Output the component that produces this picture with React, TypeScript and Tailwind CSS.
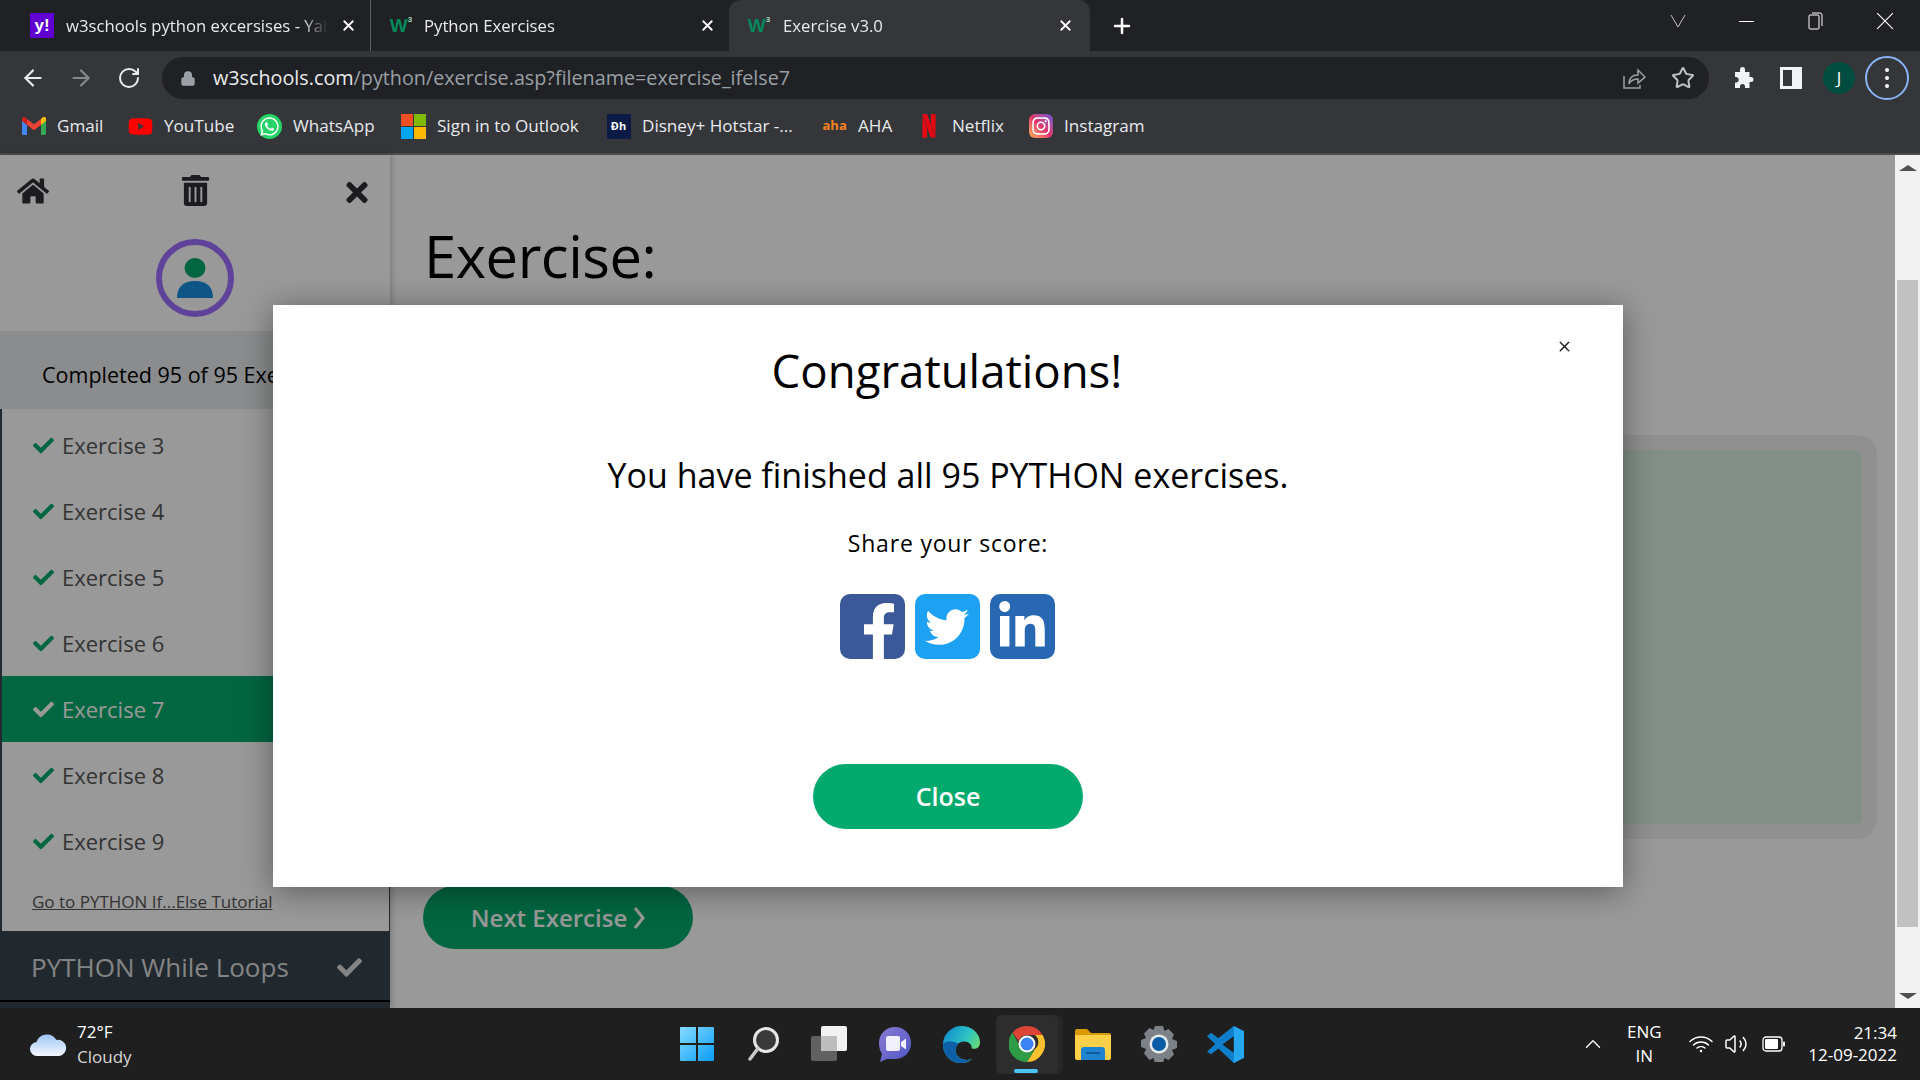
import { ArrowLeft, ArrowRight, RotateCw, Lock, Star, Plus, X, ChevronUp, Volume2 } from "lucide-react";
import {
  FaHome,
  FaTrashAlt,
  FaTimes,
  FaCheck,
  FaFacebookF,
  FaTwitter,
  FaLinkedinIn,
  FaWhatsapp,
  FaInstagram,
  FaYoutube,
} from "react-icons/fa";
import { SiNetflix } from "react-icons/si";

const W3Icon = () => (
  <span className="flex w-[24px] items-start justify-center font-['Liberation_Sans',sans-serif] font-bold text-[#04895a]">
    <span className="text-[19px] leading-[24px]">W</span>
    <span className="text-[8px] leading-[12px] text-[#9fd8c0]">3</span>
  </span>
);

const tabs = [
  { title: "w3schools python excersises - Yahoo", width: "w-[371px]", pad: "pl-[30px] pr-[13px]", gap: "ml-[12px]", active: false },
  { title: "Python Exercises", width: "w-[358px]", pad: "pl-[18px] pr-[13px]", gap: "ml-[11px]", active: false },
  { title: "Exercise v3.0", width: "w-[361px]", pad: "pl-[18px] pr-[16px]", gap: "ml-[12px]", active: true },
];

const bookmarks = [
  { name: "Gmail", width: "w-[107px]", icon: <GmailIcon /> },
  { name: "YouTube", width: "w-[129px]", icon: <FaYoutube className="h-[25px] w-[25px] text-[#f00]" /> },
  { name: "WhatsApp", width: "w-[144px]", icon: <WhatsAppIcon /> },
  { name: "Sign in to Outlook", width: "w-[205px]", icon: <MsIcon /> },
  { name: "Disney+ Hotstar -...", width: "w-[216px]", icon: <DisneyIcon /> },
  { name: "AHA", width: "w-[94px]", icon: <span className="w-[24px] text-center text-[13px] font-bold text-[#f58220]">aha</span> },
  { name: "Netflix", width: "w-[112px]", icon: <SiNetflix className="h-[24px] w-[24px] text-[#e50914]" /> },
  { name: "Instagram", width: "w-[130px]", icon: <InstaIcon /> },
];

const exercises = [3, 4, 5, 6, 7, 8, 9];

function GmailIcon() {
  return (
    <svg viewBox="0 0 24 18" className="h-[18px] w-[24px]">
      <path d="M0 3v13.5A1.5 1.5 0 0 0 1.5 18H5V8z" fill="#4285f4" />
      <path d="M24 3v13.5a1.5 1.5 0 0 1-1.500 1.500H19V8z" fill="#34a853" />
      <path d="M19 2v6l5-4V2c0-2-2-2.800-3.300-1.800z" fill="#fbbc04" />
      <path d="M5 8V2l7 5.300L19 2v6l-7 5.300z" fill="#ea4335" />
      <path d="M0 2v2l5 4V2L3.300.2C2-.800 0 0 0 2z" fill="#c5221f" />
    </svg>
  );
}

function WhatsAppIcon() {
  return (
    <span className="flex h-[25px] w-[25px] items-center justify-center rounded-full bg-[#25d366]">
      <FaWhatsapp className="h-[21px] w-[21px] text-white" />
    </span>
  );
}

function MsIcon() {
  return (
    <span className="grid h-[25px] w-[25px] grid-cols-2 grid-rows-2 gap-[1px]">
      <span className="bg-[#f25022]" />
      <span className="bg-[#7fba00]" />
      <span className="bg-[#00a4ef]" />
      <span className="bg-[#ffb900]" />
    </span>
  );
}

function DisneyIcon() {
  return (
    <span className="flex h-[25px] w-[24px] items-center justify-center bg-[#0c1a46] text-[11px] font-bold text-white">
      Ɖh
    </span>
  );
}

function InstaIcon() {
  return (
    <span className="flex h-[24px] w-[24px] items-center justify-center rounded-[6px] bg-gradient-to-tr from-[#fdb04a] via-[#e1306c] to-[#6a4cd8]">
      <FaInstagram className="h-[20px] w-[20px] text-white" />
    </span>
  );
}

function PuzzleIcon() {
  return (
    <svg viewBox="0 0 24 24" className="h-[24px] w-[24px]" fill="#f1f3f4">
      <path d="M10 3.500a2.500 2.500 0 0 1 5 0V6h4.500v5H21a2.500 2.500 0 0 1 0 5h-1.500v6H15v-1.500a2.500 2.500 0 0 0-5 0V22H5v-5.500h1.500a2.800 2.800 0 0 0 0-5.500H5V6h5z" />
    </svg>
  );
}

function WinLogo() {
  return (
    <svg viewBox="0 0 36 36" className="h-[36px] w-[36px]">
      <defs>
        <linearGradient id="win" x1="0" y1="0" x2="1" y2="1">
          <stop offset="0" stopColor="#86dcff" />
          <stop offset="1" stopColor="#0a9cf5" />
        </linearGradient>
      </defs>
      <path d="M1 2a1 1 0 0 1 1-1h15v16H1zM19 1h15a1 1 0 0 1 1 1v15H19zM1 19h16v16H2a1 1 0 0 1-1-1zM19 19h16v15a1 1 0 0 1-1 1H19z" fill="url(#win)" />
    </svg>
  );
}

function SearchIcon() {
  return (
    <svg viewBox="0 0 36 36" className="h-[36px] w-[36px]">
      <circle cx="21" cy="14" r="11.500" fill="#3a3a3a" stroke="#e6e6e6" strokeWidth="3" />
      <path d="M12.500 23 5 33" stroke="#c9c9c9" strokeWidth="3.500" strokeLinecap="round" />
    </svg>
  );
}

function TaskViewIcon() {
  return (
    <svg viewBox="0 0 36 36" className="h-[36px] w-[36px]">
      <rect x="10" y="0" width="26" height="25" rx="2" fill="#f2f2f2" />
      <rect x="0" y="10" width="26" height="25" rx="2" fill="#6d6d6d" fillOpacity="0.85" />
      <rect x="10" y="10" width="16" height="15" fill="#bdbdbd" />
    </svg>
  );
}

function ChatIcon() {
  return (
    <svg viewBox="0 0 36 36" className="h-[36px] w-[36px]">
      <defs>
        <linearGradient id="chat" x1="0" y1="0" x2="1" y2="1">
          <stop offset="0" stopColor="#8a7bd4" />
          <stop offset="1" stopColor="#4e55c4" />
        </linearGradient>
      </defs>
      <path d="M18 1c9.500 0 16 7 16 16s-6.500 16-16 16h-8l-7 3 2-8C3 25 2 21 2 17 2 8 8.500 1 18 1z" fill="url(#chat)" />
      <rect x="9" y="10" width="14" height="15" rx="2" fill="#f1effc" />
      <path d="M24 16l5-3.500v11l-5-3.500z" fill="#f1effc" />
    </svg>
  );
}

function EdgeIcon() {
  return (
    <svg viewBox="0 0 36 36" className="h-[37px] w-[37px]">
      <defs>
        <linearGradient id="edgeA" x1="0" y1="0" x2="1" y2="0.600">
          <stop offset="0" stopColor="#0c85d0" />
          <stop offset="0.600" stopColor="#2dc3c4" />
          <stop offset="1" stopColor="#70e06b" />
        </linearGradient>
      </defs>
      <path d="M18 0C8 0 0 8 0 18c0 10 7 18 17 18 4 0 8-1 11-4-5 2-11 1-14-3-3-4-2-9 1-12 4-3 9-2 11 0 2 2 2 4 2 5 4 1 8-1 8-6C36 7 28 0 18 0z" fill="url(#edgeA)" />
      <path d="M0 18c0 10 7 18 17 18 4 0 8-1 11-4-5 2-11 1-14-3-3-4-2-9 1-12-4-2-12-4-15 1z" fill="#0d5fa8" />
    </svg>
  );
}

function ChromeIcon() {
  return (
    <svg viewBox="0 0 36 36" className="h-[36px] w-[36px]">
      <path d="M18 0a18 18 0 0 1 15.600 9H18a9 9 0 0 0-8.500 6L3.500 6.500A18 18 0 0 1 18 0z" fill="#db4437" />
      <path d="M33.600 9A18 18 0 0 1 18 36l8-13a9 9 0 0 0 0-14z" fill="#fbc02d" />
      <path d="M18 36A18 18 0 0 1 3.500 6.500l7 13A9 9 0 0 0 26 23z" fill="#2e9b47" />
      <circle cx="18" cy="18" r="8.500" fill="#fff" />
      <circle cx="18" cy="18" r="6.500" fill="#3b82f6" />
    </svg>
  );
}

function FolderIcon() {
  return (
    <svg viewBox="0 0 36 36" className="h-[36px] w-[36px]">
      <path d="M0 5a2 2 0 0 1 2-2h10l4 4h18a2 2 0 0 1 2 2v4H0z" fill="#d99a06" />
      <path d="M0 9h36v23a2 2 0 0 1-2 2H2a2 2 0 0 1-2-2z" fill="#fdd047" />
      <path d="M6 34V24a3 3 0 0 1 3-3h18a3 3 0 0 1 3 3v10z" fill="#1e84d0" />
      <rect x="11" y="26" width="14" height="2" fill="#0f5a9a" />
    </svg>
  );
}

function GearIcon() {
  return (
    <svg viewBox="0 0 36 36" className="h-[36px] w-[36px]">
      <path d="M14 0h8l1.500 5 4-2 5.500 5.500-2 4.500 5 2v7l-5 2 2 4.500-5.500 5.500-4-2-1.500 5h-8l-1.500-5-4 2L3 27.500 5 23l-5-2v-7l5-2-2-4.500L8.500 2l4 2z" fill="#7c8288" />
      <circle cx="18" cy="18" r="9.500" fill="#e7eaec" />
      <circle cx="18" cy="18" r="7" fill="#0a5ba6" />
    </svg>
  );
}

function VsCodeIcon() {
  return (
    <svg viewBox="0 0 36 36" className="h-[37px] w-[37px]">
      <path d="M26 0 36 5v26l-10 5-15-14-7 5.500-4-2.500 8-7.500-8-7.500L4 6.500 11 12z" fill="#0f7fcc" />
      <path d="M26 0 36 5v26l-10 5z" fill="#25a6ee" />
      <path d="M26 10 15 18l11 8z" fill="#1f1f1f" />
    </svg>
  );
}

function BatteryIcon() {
  return (
    <svg viewBox="0 0 24 16" className="h-[16px] w-[24px]">
      <rect x="1" y="1" width="19" height="14" rx="3" fill="none" stroke="#fff" strokeWidth="1.300" />
      <rect x="3" y="3" width="13" height="10" rx="1" fill="#fff" />
      <rect x="21" y="5.500" width="2" height="5" rx="1" fill="#fff" />
    </svg>
  );
}

function WifiIcon() {
  return (
    <svg viewBox="0 0 24 18" className="h-[18px] w-[24px]" fill="none" stroke="#fff" strokeWidth="1.500" strokeLinecap="round">
      <path d="M1 6.500c6-6 16-6 22 0" />
      <path d="M4.500 10c4-4 11-4 15 0" />
      <path d="M8 13c2.500-2 5.500-2 8 0" />
      <circle cx="12" cy="16" r="1.200" fill="#fff" stroke="none" />
    </svg>
  );
}

function ShareIcon() {
  return (
    <svg viewBox="0 0 24 24" className="h-[24px] w-[24px]" fill="none" stroke="#9aa0a6" strokeWidth="1.500">
      <path d="M2 10v12h16v-3" />
      <path d="M7 18c0-6 3-9 9-9V4l7 7-7 6v-4c-4 0-7 1-9 5z" />
    </svg>
  );
}

function Avatar() {
  return (
    <div className="flex h-[78px] w-[78px] items-center justify-center rounded-full border-[6px] border-[#9e6eff]">
      <svg viewBox="0 0 36 40" className="h-[40px] w-[36px]">
        <ellipse cx="18" cy="10" rx="10.500" ry="10" fill="#04AA6D" />
        <path d="M0 40c0-10 5-17 18-17s18 7 18 17z" fill="#1a8fe0" />
      </svg>
    </div>
  );
}

function Sidebar() {
  return (
    <aside className="flex h-full w-[390px] shrink-0 flex-col overflow-hidden bg-white shadow-[2px_0_6px_rgba(0,0,0,0.2)]">
      <div className="flex h-[84px] shrink-0 items-start justify-between pl-[17px] pr-[20px] pt-[20px] text-[#2d3036]">
        <FaHome className="h-[32px] w-[32px]" />
        <FaTrashAlt className="mr-[2px] h-[31px] w-[29px]" />
        <FaTimes className="mt-[2px] h-[31px] w-[26px]" />
      </div>
      <div className="flex h-[92px] shrink-0 flex-col items-center">
        <Avatar />
      </div>
      <div className="flex h-[78px] shrink-0 items-center whitespace-nowrap bg-[#E7E9EB] pl-[42px] pt-[10px] text-[21.500px] leading-none text-black">
        Completed 95 of 95 Exercises
      </div>
      <div className="flex min-h-0 flex-1 flex-col border-l-[2px] border-r-[1px] border-[#38444d] pt-[3px]">
        {exercises.map((n) => (
          <div
            key={n}
            className={`flex h-[66px] shrink-0 items-center pl-[31px] pt-[1px] text-[22px] ${n === 7 ? "bg-[#04AA6D] text-white" : "text-[#555]"}`}
          >
            <FaCheck className={`mr-[8px] h-[21px] w-[21px] ${n === 7 ? "text-white" : "text-[#04AA6D]"}`} />
            Exercise {n}
          </div>
        ))}
        <a className="ml-[30px] mt-[4px] whitespace-nowrap text-[17px] leading-[48px] text-[#555] underline">Go to PYTHON If...Else Tutorial</a>
      </div>
      <div className="flex h-[77px] shrink-0 flex-col bg-[#38444d]">
        <div className="flex h-[71px] items-center justify-between border-b-[2px] border-black pl-[31px] pr-[28px] pt-[3px] text-[26px] text-[#ddd]">
          PYTHON While Loops
          <FaCheck className="h-[25px] w-[25px]" />
        </div>
      </div>
    </aside>
  );
}

function Modal() {
  return (
    <div className="absolute left-[273px] top-[150px] flex h-[582px] w-[1350px] flex-col items-center bg-white shadow-[0_4px_30px_rgba(0,0,0,0.4)]">
      <button className="absolute right-[50px] top-[33px] text-[#222]">
        <X className="h-[17px] w-[17px]" strokeWidth={2} />
      </button>
      <h2 className="mr-[2px] mt-[30px] text-[45.600px] leading-[70px] text-black">Congratulations!</h2>
      <p className="mt-[37px] text-[34px] leading-[66px] text-black">You have finished all 95 PYTHON exercises.</p>
      <p className="mt-[17px] text-[23px] leading-[36px] tracking-[0.8px] text-black">Share your score:</p>
      <div className="mr-[2px] mt-[33px] flex gap-[10px]">
        <span className="flex h-[65px] w-[65px] items-end justify-center overflow-hidden rounded-[10px] bg-[#3b5998] pl-[14px]">
          <FaFacebookF className="h-[56px] w-[36px] text-white" />
        </span>
        <span className="flex h-[65px] w-[65px] items-center justify-center rounded-[10px] bg-[#1da1f2]">
          <FaTwitter className="h-[44px] w-[44px] text-white" />
        </span>
        <span className="flex h-[65px] w-[65px] items-center justify-center rounded-[10px] bg-[#2867b2]">
          <FaLinkedinIn className="h-[52px] w-[52px] text-white" />
        </span>
      </div>
      <button className="mt-[105px] h-[65px] w-[270px] rounded-full bg-[#04AA6D] text-[25px] font-semibold text-white">Close</button>
    </div>
  );
}

export default function App() {
  return (
    <div className="flex h-screen w-screen flex-col overflow-hidden bg-white font-['Open_Sans','Noto_Sans',sans-serif]">
      {/* tab strip */}
      <div className="flex h-[51px] shrink-0 items-end bg-[#202124] text-[#e8eaed]">
        {tabs.map((t, i) => (
          <div
            key={t.title}
            className={`flex h-[51px] shrink-0 items-center text-[16.700px] ${t.width} ${t.pad} ${t.active ? "rounded-t-[12px] bg-[#35363a]" : ""} ${i === 0 ? "border-r border-[#5f6368]" : ""}`}
          >
            {i === 0 ? (
              <span className="flex h-[25px] w-[24px] items-center justify-center bg-[#5f01d1] font-['Liberation_Sans',sans-serif] text-[17px] font-bold text-white">y!</span>
            ) : (
              <W3Icon />
            )}
            <span className={`w-[262px] overflow-hidden whitespace-nowrap [mask-image:linear-gradient(to_right,black_90%,transparent)] ${t.gap}`}>{t.title}</span>
            <X className="ml-auto h-[17px] w-[17px] text-white" strokeWidth={2.5} />
          </div>
        ))}
        <div className="flex h-[51px] w-[64px] shrink-0 items-center justify-center">
          <Plus className="h-[24px] w-[24px] text-white" strokeWidth={2.5} />
        </div>
        <div className="ml-auto flex h-[42px] self-start text-white">
          <div className="flex w-[68px] items-center justify-center">
            <svg viewBox="0 0 16 16" className="h-[16px] w-[16px]" fill="none" stroke="#c4c4c4"><path d="M1 2l7 12 7-12" /></svg>
          </div>
          <div className="flex w-[69px] items-center justify-center">
            <span className="h-[1px] w-[15px] bg-white" />
          </div>
          <div className="flex w-[69px] items-center justify-center">
            <svg viewBox="0 0 16 18" className="h-[24px] w-[16px]" fill="none" stroke="#fff"><rect x="1" y="3" width="10" height="14" rx="1" /><path d="M4 1h8a2 2 0 0 1 2 2v11" /></svg>
          </div>
          <div className="flex w-[70px] items-center justify-center">
            <svg viewBox="0 0 16 16" className="h-[18px] w-[18px]" fill="none" stroke="#fff"><path d="M1 1l14 14M15 1L1 15" /></svg>
          </div>
        </div>
      </div>

      {/* toolbar */}
      <div className="flex h-[54px] shrink-0 items-center bg-[#35363a] pl-[9px]">
        <div className="flex w-[48px] justify-center"><ArrowLeft className="h-[26px] w-[26px] text-[#e8eaed]" /></div>
        <div className="flex w-[48px] justify-center"><ArrowRight className="h-[26px] w-[26px] text-[#85888c]" /></div>
        <div className="flex w-[48px] justify-center"><RotateCw className="h-[24px] w-[24px] text-[#e8eaed]" /></div>
        <div className="ml-[9px] flex h-[42px] w-[1547px] shrink-0 items-center rounded-full bg-[#202124] pl-[18px] pr-[14px]">
          <Lock className="h-[17px] w-[16px] fill-[#9aa0a6] text-[#9aa0a6]" />
          <span className="ml-[17px] text-[19.750px] text-[#9aa0a6]"><span className="text-[#e8eaed]">w3schools.com</span>/python/exercise.asp?filename=exercise_ifelse7</span>
          <span className="ml-auto mr-[25px]"><ShareIcon /></span>
          <Star className="h-[24px] w-[24px] text-[#bdc1c6]" strokeWidth={2} />
        </div>
        <div className="ml-[8px] flex w-[50px] justify-center"><PuzzleIcon /></div>
        <div className="flex w-[48px] justify-center">
          <span className="flex h-[22px] w-[22px] justify-end border-[3px] border-[#f1f3f4]"><span className="h-full w-[7px] bg-[#f1f3f4]" /></span>
        </div>
        <div className="flex w-[48px] justify-center">
          <span className="flex h-[32px] w-[32px] items-center justify-center rounded-full bg-[#004d40] text-[17px] text-white">J</span>
        </div>
        <div className="ml-[2px] flex h-[44px] w-[44px] flex-col items-center justify-center gap-[4px] rounded-full border-[2px] border-[#8ab4f8]">
          <span className="h-[4px] w-[4px] rounded-full bg-white" />
          <span className="h-[4px] w-[4px] rounded-full bg-white" />
          <span className="h-[4px] w-[4px] rounded-full bg-white" />
        </div>
      </div>

      {/* bookmarks */}
      <div className="flex h-[50px] shrink-0 items-start border-b-[2px] border-[#4b4c4f] bg-[#35363a] pl-[21px] text-[17.100px] text-[#e8eaed]">
        {bookmarks.map((b) => (
          <div key={b.name} className={`flex h-[42px] shrink-0 items-center gap-[11px] whitespace-nowrap ${b.width}`}>
            <span className="flex w-[25px] shrink-0 justify-center">{b.icon}</span>
            {b.name}
          </div>
        ))}
      </div>

      {/* page */}
      <div className="flex min-h-0 flex-1">
        <div className="relative flex min-w-0 flex-1">
          <Sidebar />
          <main className="flex-1 pl-[33px] pr-[18px]">
            <h1 className="ml-[1px] mt-[57px] h-[68px] text-[58px] leading-[88px] tracking-[-0.5px] text-black">Exercise:</h1>
            <div className="mt-[155px] h-[404px] rounded-[20px] bg-[#f1f1f1] p-[15px]">
              <div className="h-full rounded-[6px] bg-[#D9EEE1]" />
            </div>
            <button className="mt-[47px] flex h-[63px] w-[270px] items-center justify-center gap-[6px] rounded-full bg-[#04AA6D] text-[24px] font-semibold text-white">
              Next Exercise
              <svg viewBox="0 0 12 22" className="h-[22px] w-[12px]" fill="none" stroke="#fff" strokeWidth="3"><path d="M2 1l8 10-8 10" /></svg>
            </button>
          </main>
          <div className="absolute inset-0 bg-black/40" />
          <Modal />
        </div>
        <div className="flex w-[25px] shrink-0 flex-col items-center bg-[#f1f1f1]">
          <div className="flex h-[25px] items-center justify-center"><span className="h-0 w-0 border-x-[9px] border-b-[6px] border-x-transparent border-b-[#505050]" /></div>
          <div className="mt-[100px] h-[647px] w-[21px] bg-[#c1c1c1]" />
          <div className="mt-auto flex h-[25px] items-center justify-center"><span className="h-0 w-0 border-x-[9px] border-t-[6px] border-x-transparent border-t-[#505050]" /></div>
        </div>
      </div>

      {/* taskbar */}
      <div className="relative flex h-[72px] shrink-0 items-center bg-[#1f1f1f] text-white">
        <div className="flex w-[664px] shrink-0 items-center pl-[30px]">
          <svg viewBox="0 0 36 24" className="h-[24px] w-[37px]">
            <defs>
              <linearGradient id="cloud" x1="0" y1="0" x2="0" y2="1">
                <stop offset="0" stopColor="#9cc4f5" />
                <stop offset="1" stopColor="#f4f8ff" />
              </linearGradient>
            </defs>
            <path d="M7 24a7 7 0 0 1-1-14A11 11 0 0 1 26 8a8 8 0 0 1 3 16z" fill="url(#cloud)" />
          </svg>
          <div className="ml-[10px] flex flex-col text-[17px] leading-[25px]">
            <span>72°F</span>
            <span className="text-[#d6d6d6]">Cloudy</span>
          </div>
        </div>
        <div className="flex items-center">
          {[<WinLogo />, <SearchIcon />, <TaskViewIcon />, <ChatIcon />, <EdgeIcon />].map((icon, i) => (
            <div key={i} className="flex w-[66px] justify-center">{icon}</div>
          ))}
          <div className="relative ml-[2px] flex h-[59px] w-[62px] items-center justify-center rounded-[6px] bg-[#2d2d2d] shadow-[5px_0_0_#272727]">
            <ChromeIcon />
            <span className="absolute bottom-[1px] left-[18px] h-[4px] w-[24px] rounded-full bg-[#4cc2ff]" />
          </div>
          <div className="ml-[2px] flex w-[66px] justify-center"><FolderIcon /></div>
          <div className="flex w-[66px] justify-center"><GearIcon /></div>
          <div className="flex w-[66px] justify-center"><VsCodeIcon /></div>
        </div>
        <div className="ml-auto flex items-center pr-[23px]">
          <ChevronUp className="h-[26px] w-[26px]" strokeWidth={1.2} />
          <div className="ml-[12px] flex w-[52px] flex-col items-center text-[17px] leading-[24px]">
            <span>ENG</span>
            <span>IN</span>
          </div>
          <div className="ml-[19px]"><WifiIcon /></div>
          <Volume2 className="ml-[11px] h-[24px] w-[24px]" strokeWidth={1.5} />
          <div className="ml-[14px]"><BatteryIcon /></div>
          <div className="ml-[22px] flex flex-col items-end text-[17px] leading-[22px]">
            <span>21:34</span>
            <span>12-09-2022</span>
          </div>
        </div>
      </div>
    </div>
  );
}
